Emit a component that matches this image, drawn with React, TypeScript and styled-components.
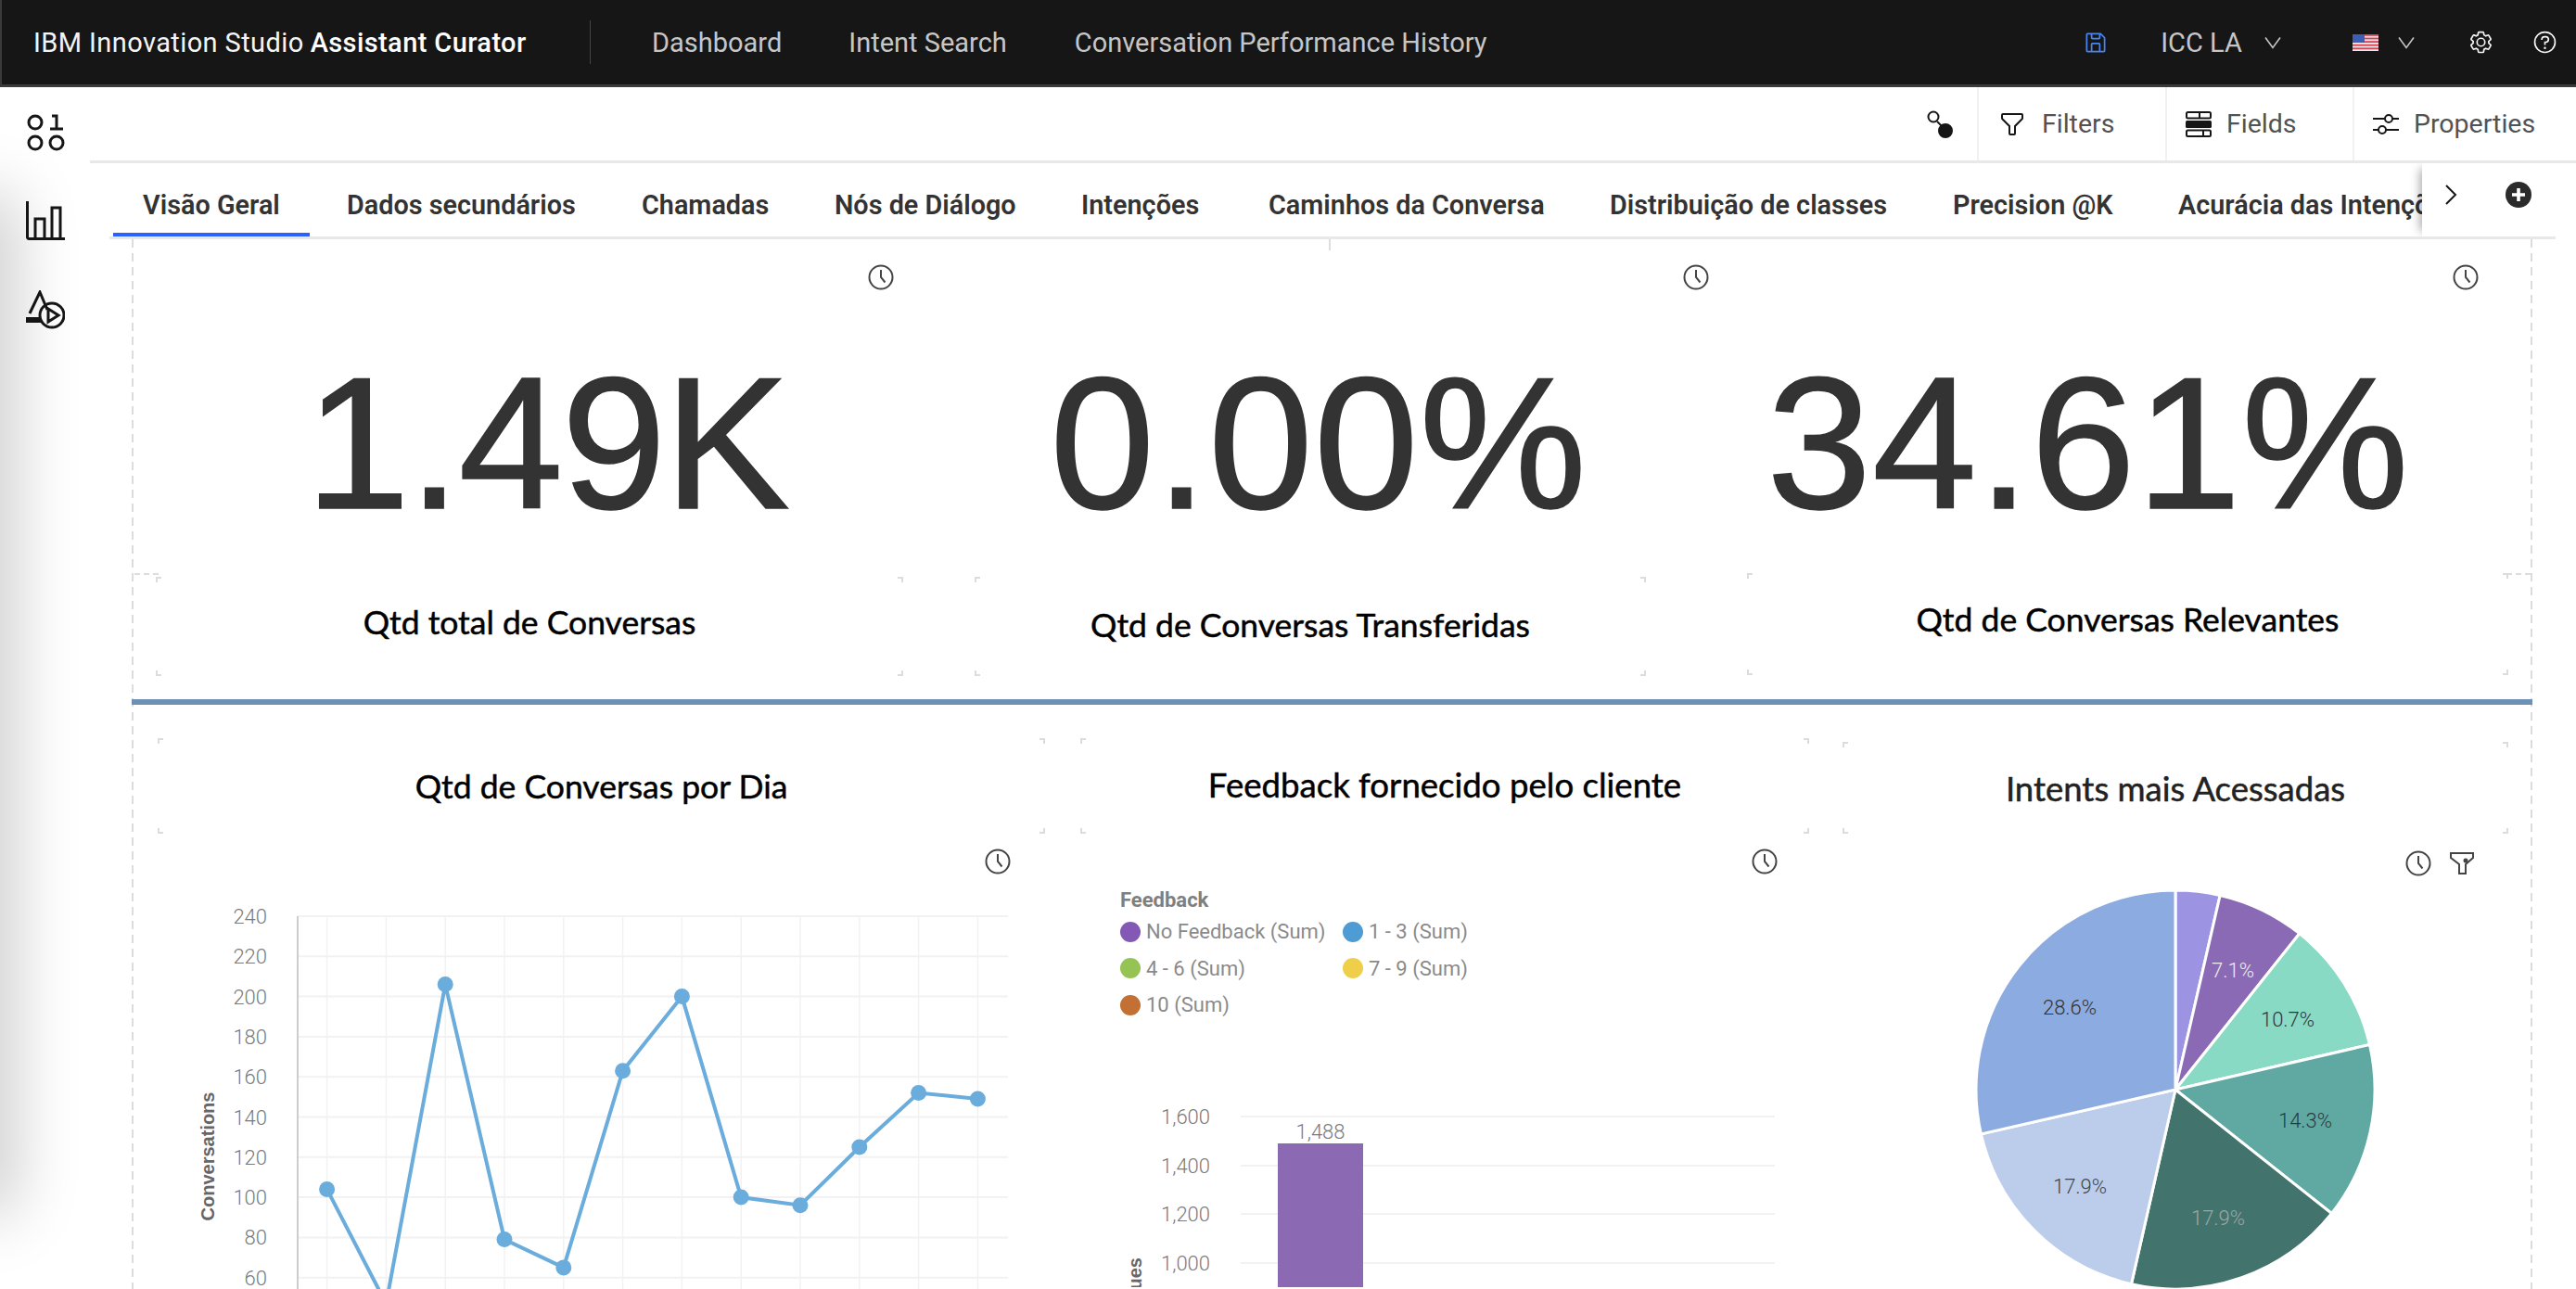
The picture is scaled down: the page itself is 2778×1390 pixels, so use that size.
import React from "react";
import styled, { createGlobalStyle } from "styled-components";

const GlobalStyle = createGlobalStyle`
  html, body {
    margin: 0;
    padding: 0;
    background: #fff;
    font-family: Roboto, "Liberation Sans", sans-serif;
  }
  * { box-sizing: border-box; }
`;

const Page = styled.div`
  width: 2778px;
  height: 1390px;
  overflow: hidden;
  display: flex;
  flex-direction: column;
  background: #fff;
`;

const Nav = styled.header`
  height: 94px;
  flex: none;
  display: flex;
  align-items: center;
  background: #161616;
  border-left: 2px solid #3a3a3a;
  border-bottom: 3px solid #3a3a3a;
  padding-left: 34px;
`;

const Brand = styled.div`
  width: 601px;
  height: 47px;
  display: flex;
  align-items: center;
  border-right: 1px solid #444;
  font-size: 29px;
  letter-spacing: 0.4px;
  color: #f4f4f4;
  white-space: nowrap;
  b { font-weight: 500; color: #fff; margin-left: 7px; }
`;

const NavLink = styled.a`
  font-size: 29px;
  color: #c6c6c6;
  white-space: nowrap;
  margin-left: ${(p: { $left: number }) => p.$left}px;
`;

const NavRight = styled.div`
  margin-left: auto;
  display: flex;
  align-items: center;
  height: 100%;
  color: #c6c6c6;
  font-size: 29px;
`;

const NavSlot = styled.div<{ $w: number; $gap?: number }>`
  width: ${(p) => p.$w}px;
  display: flex;
  align-items: center;
  justify-content: center;
  gap: ${(p) => p.$gap ?? 24}px;
`;

const Body = styled.div`
  flex: 1;
  min-height: 0;
  display: flex;
`;

const Sidebar = styled.aside`
  width: 97px;
  flex: none;
  position: relative;
  overflow: hidden;
  display: flex;
  flex-direction: column;
  align-items: center;
  padding-top: 29px;
  gap: 54px;
  &::before {
    content: "";
    position: absolute;
    left: -40px;
    top: 130px;
    width: 40px;
    height: 1070px;
    box-shadow: 0 0 70px 14px rgba(0, 0, 0, 0.22);
  }
`;

const Main = styled.main`
  flex: 1;
  min-width: 0;
  display: flex;
  flex-direction: column;
`;

const Toolbar = styled.div`
  height: 82px;
  flex: none;
  display: flex;
  justify-content: flex-end;
  border-bottom: 3px solid #e8e8e8;
`;

const ToolLink = styled.div<{ $w: number }>`
  width: ${(p) => p.$w}px;
  display: flex;
  align-items: center;
  gap: 16px;
  padding-left: 20px;
  border-left: 2px solid #f1f1f1;
  font-size: 28.5px;
  color: #525252;
`;

const SearchSlot = styled.div`
  width: 78px;
  display: flex;
  align-items: center;
  padding-left: 24px;
`;

const TabBar = styled.nav`
  height: 82px;
  flex: none;
  margin: 0 22px 0 21px;
  position: relative;
  overflow: hidden;
  display: flex;
  gap: 8px;
  padding-left: 4px;
  border-bottom: 3px solid #e8e8e8;
`;

const Tab = styled.div<{ $active?: boolean; $w: number }>`
  width: ${(p) => p.$w}px;
  flex: none;
  height: 79px;
  padding: 14px 0 0 32px;
  display: flex;
  align-items: center;
  font-size: 28.8px;
  font-weight: 600;
  color: #333;
  white-space: nowrap;
  border-bottom: 4px solid ${(p) => (p.$active ? "#2962ff" : "transparent")};
`;

const TabCover = styled.div`
  position: absolute;
  right: 0;
  top: 0;
  bottom: 0;
  width: 144px;
  background: #fff;
  box-shadow: -8px 0 10px -6px rgba(0, 0, 0, 0.35);
  display: flex;
  align-items: center;
  padding: 0 26px 12px 24px;
  justify-content: space-between;
`;

const dash = "repeating-linear-gradient(to bottom, #dcdcdc 0 9px, transparent 9px 15px)";

const Canvas = styled.section`
  margin-left: 45px;
  width: 2589px;
  flex: 1;
  min-height: 0;
  position: relative;
  overflow: hidden;
  padding: 0 2px 0 3px;
  background: ${dash} left top / 2px 100% no-repeat, ${dash} right top / 2px 100% no-repeat;
  &::before {
    content: "";
    position: absolute;
    left: 1291px;
    top: 0;
    height: 12px;
    border-left: 2px dashed #ddd;
  }
`;

const Metrics = styled.div`
  height: 360px;
  display: grid;
  grid-template-columns: 889px 776px 1fr;
`;

const Metric = styled.div<{ $endPad?: number }>`
  display: flex;
  flex-direction: column;
  padding-right: ${(p) => p.$endPad ?? 0}px;
`;

const MetricTools = styled.div<{ $shift: number }>`
  height: 82px;
  display: flex;
  align-items: center;
  justify-content: flex-end;
  margin-right: ${(p) => p.$shift}px;
`;

const BigNumber = styled.div<{ $track?: number }>`
  margin-top: 36px;
  text-align: center;
  font-family: "Liberation Sans", Arial, sans-serif;
  font-size: 203px;
  line-height: 1;
  letter-spacing: ${(p) => p.$track ?? 0.8}px;
  color: #333;
  white-space: nowrap;
  -webkit-text-stroke: 1.5px #333;
`;

const corner = (c: string) => `
  linear-gradient(${c},${c}) 0 0/6px 2px no-repeat,
  linear-gradient(${c},${c}) 0 0/2px 6px no-repeat,
  linear-gradient(${c},${c}) 100% 0/6px 2px no-repeat,
  linear-gradient(${c},${c}) 100% 0/2px 6px no-repeat,
  linear-gradient(${c},${c}) 0 100%/6px 2px no-repeat,
  linear-gradient(${c},${c}) 0 100%/2px 6px no-repeat,
  linear-gradient(${c},${c}) 100% 100%/6px 2px no-repeat,
  linear-gradient(${c},${c}) 100% 100%/2px 6px no-repeat
`;

const CaptionRow = styled.div`
  height: 136px;
  display: flex;
  align-items: flex-start;
  padding-left: 23px;
  position: relative;
  &::before, &::after {
    content: "";
    position: absolute;
    top: 0;
    width: 26px;
    border-top: 2px dashed #ddd;
  }
  &::before { left: 0; }
  &::after { right: 0; }
`;

const TitleBox = styled.div<{ $w: number; $h: number; $ml?: number; $mt?: number; $pb?: number }>`
  width: ${(p) => p.$w}px;
  height: ${(p) => p.$h}px;
  flex: none;
  margin-left: ${(p) => p.$ml ?? 0}px;
  margin-top: ${(p) => p.$mt ?? 0}px;
  padding-bottom: ${(p) => p.$pb ?? 0}px;
  display: flex;
  align-items: center;
  justify-content: center;
  background: ${corner("#dcdcdc")};
`;

const Title = styled.h3<{ $soft?: boolean; $size?: number }>`
  margin: 0;
  font-family: Lato, "Open Sans", sans-serif;
  font-size: ${(p) => p.$size ?? 35.5}px;
  font-weight: 400;
  color: ${(p) => (p.$soft ? "#222" : "#000")};
  -webkit-text-stroke: 0.5px ${(p) => (p.$soft ? "#222" : "#000")};
  white-space: nowrap;
`;

const Rule = styled.div`
  height: 6px;
  margin: 0 -2px 0 -3px;
  background: #6d90b4;
`;

const TitleRow = styled.div`
  display: flex;
  padding: 36px 0 0 25px;
`;

const ChartGrid = styled.div`
  display: grid;
  grid-template-columns: 975px 840px 1fr;
`;

const ChartPanel = styled.div`
  display: flex;
  flex-direction: column;
  min-width: 0;
`;

const PanelTools = styled.div<{ $right: number; $top?: number }>`
  height: 60px;
  flex: none;
  display: flex;
  align-items: center;
  justify-content: flex-end;
  gap: 20px;
  padding-top: ${(p) => p.$top ?? 0}px;
  padding-right: ${(p) => p.$right}px;
`;

const Legend = styled.div`
  height: 144px;
  padding-left: 88px;
  color: #8a8a8a;
  font-size: 22px;
`;

const LegendTitle = styled.div`
  font-weight: 700;
  height: 24px;
  line-height: 24px;
  color: #7f7f7f;
`;

const LegendGrid = styled.div`
  display: grid;
  grid-template-columns: 240px 200px;
  grid-auto-rows: 39.5px;
  margin-top: 2px;
`;

const LegendItem = styled.div`
  display: flex;
  align-items: center;
  gap: 6px;
  white-space: nowrap;
`;

const Dot = styled.span<{ $c: string }>`
  width: 22px;
  height: 22px;
  border-radius: 50%;
  background: ${(p) => p.$c};
`;

const ChartSvg = styled.svg`
  display: block;
  text {
    font-family: Roboto, "Liberation Sans", sans-serif;
    font-size: 22px;
    font-weight: 300;
    fill: #7a7a7a;
  }
  .axis-title {
    font-family: "Liberation Sans", Arial, sans-serif;
    font-size: 20px;
    font-weight: 700;
    fill: #666;
  }
`;

// ---- icons

const Clock = () => (
  <svg width="28" height="28" viewBox="0 0 28 28" fill="none" stroke="#444" strokeWidth="2">
    <circle cx="14" cy="14" r="12.5" />
    <path d="M14 6v8l4.5 5.5" />
  </svg>
);

const FunnelDot = () => (
  <svg width="26" height="26" viewBox="0 0 26 26" fill="none" stroke="#444" strokeWidth="2">
    <path d="M1 2h24v5l-8 7v10h-7V14L1 7z" />
    <circle cx="17" cy="10" r="2.5" fill="#444" stroke="none" />
  </svg>
);

const Chevron = () => (
  <svg width="18" height="14" viewBox="0 0 18 14" fill="none" stroke="#c6c6c6" strokeWidth="1.6">
    <path d="M1 1.5l8 11 8-11" />
  </svg>
);

const SaveIcon = () => (
  <svg width="28" height="28" viewBox="0 0 32 32" fill="#4a84f0">
    <path d="M27.71,9.29l-5-5A1,1,0,0,0,22,4H6A2,2,0,0,0,4,6V26a2,2,0,0,0,2,2H26a2,2,0,0,0,2-2V10A1,1,0,0,0,27.71,9.29ZM12,6h8v4H12Zm8,20H12V18h8Zm2,0V18a2,2,0,0,0-2-2H12a2,2,0,0,0-2,2v8H6V6h4v4a2,2,0,0,0,2,2h8a2,2,0,0,0,2-2V6.41l4,4V26Z" />
  </svg>
);

const GearIcon = () => (
  <svg width="27" height="27" viewBox="0 0 32 32" fill="#f4f4f4">
    <path d="M27,16.76c0-.25,0-.5,0-.76s0-.51,0-.77l1.92-1.68A2,2,0,0,0,29.3,11L26.94,7a2,2,0,0,0-1.73-1,2,2,0,0,0-.64.1l-2.43.82a11.35,11.35,0,0,0-1.31-.75l-.51-2.52a2,2,0,0,0-2-1.61H13.64a2,2,0,0,0-2,1.61l-.51,2.52a11.48,11.48,0,0,0-1.32.75L7.43,6.06A2,2,0,0,0,6.79,6,2,2,0,0,0,5.06,7L2.7,11a2,2,0,0,0,.41,2.51L5,15.24c0,.25,0,.5,0,.76s0,.51,0,.77L3.11,18.45A2,2,0,0,0,2.7,21L5.06,25a2,2,0,0,0,1.73,1,2,2,0,0,0,.64-.1l2.43-.82a11.35,11.35,0,0,0,1.31.75l.51,2.52a2,2,0,0,0,2,1.61h4.72a2,2,0,0,0,2-1.61l.51-2.52a11.48,11.48,0,0,0,1.32-.75l2.42.82a2,2,0,0,0,.64.1,2,2,0,0,0,1.73-1L29.3,21a2,2,0,0,0-.41-2.51ZM25.21,24l-3.43-1.16a8.86,8.86,0,0,1-2.71,1.57L18.36,28H13.64l-.71-3.55a9.36,9.36,0,0,1-2.7-1.57L6.79,24,4.43,20l2.72-2.4a8.9,8.9,0,0,1,0-3.13L4.43,12,6.79,8l3.43,1.16a8.86,8.86,0,0,1,2.71-1.57L13.64,4h4.72l.71,3.55a9.36,9.36,0,0,1,2.7,1.57L25.21,8,27.57,12l-2.72,2.4a8.9,8.9,0,0,1,0,3.13L27.57,20Z" />
    <path d="M16,22a6,6,0,1,1,6-6A5.94,5.94,0,0,1,16,22Zm0-10a3.91,3.91,0,0,0-4,4,3.91,3.91,0,0,0,4,4,3.91,3.91,0,0,0,4-4A3.91,3.91,0,0,0,16,12Z" />
  </svg>
);

const HelpIcon = () => (
  <svg width="27" height="27" viewBox="0 0 32 32" fill="#f4f4f4">
    <path d="M16,2A14,14,0,1,0,30,16,14,14,0,0,0,16,2Zm0,26A12,12,0,1,1,28,16,12,12,0,0,1,16,28Z" />
    <circle cx="16" cy="23.5" r="1.5" />
    <path d="M17,8H15.5A4.49,4.49,0,0,0,11,12.5V13h2v-.5A2.5,2.5,0,0,1,15.5,10H17a2.5,2.5,0,0,1,0,5H15v4.5h2V17a4.5,4.5,0,0,0,0-9Z" />
  </svg>
);

const FlagIcon = () => (
  <svg width="28" height="18" viewBox="0 0 28 18">
    <rect width="28" height="18" fill="#e8e8f0" />
    {[0, 3.6, 7.2, 10.8, 14.4].map((y) => (
      <rect key={y} y={y} width="28" height="1.8" fill="#d8434f" />
    ))}
    <rect width="13" height="9" fill="#3c5fb5" />
  </svg>
);

const LinkIcon = () => (
  <svg width="28" height="30" viewBox="0 0 28 30" fill="none" stroke="#161616" strokeWidth="2">
    <circle cx="7" cy="7" r="5.5" />
    <path d="M11 12l7 7" />
    <circle cx="20" cy="22" r="7" fill="#161616" />
  </svg>
);

const FilterIcon = () => (
  <svg width="32" height="32" viewBox="0 0 32 32" fill="#161616">
    <path d="M18,28H14a2,2,0,0,1-2-2V18.41L4.59,11A2,2,0,0,1,4,9.59V6A2,2,0,0,1,6,4H26a2,2,0,0,1,2,2V9.59A2,2,0,0,1,27.41,11L20,18.41V26A2,2,0,0,1,18,28ZM6,6V9.59l8,8V26h4V17.59l8-8V6Z" />
  </svg>
);

const FieldsIcon = () => (
  <svg width="28" height="28" viewBox="0 0 28 28" fill="none" stroke="#161616" strokeWidth="2">
    <rect x="1" y="1" width="26" height="6.5" rx="1.5" />
    <path d="M15 1v6.5" />
    <rect x="0" y="10" width="28" height="8" rx="1.5" fill="#161616" stroke="none" />
    <rect x="1" y="20.5" width="26" height="6.5" rx="1.5" />
    <path d="M19 20.5V27" />
  </svg>
);

const SlidersIcon = () => (
  <svg width="28" height="28" viewBox="0 0 28 28" fill="none" stroke="#161616" strokeWidth="2">
    <path d="M0 8h13M21 8h7M0 20h6M14 20h14" />
    <circle cx="17" cy="8" r="4" />
    <circle cx="10" cy="20" r="4" />
  </svg>
);

const BinaryIcon = () => (
  <svg width="42" height="40" viewBox="0 0 42 40" fill="none" stroke="#161616" strokeWidth="3">
    <circle cx="10" cy="9" r="7" />
    <circle cx="10" cy="31" r="7" />
    <circle cx="33" cy="31" r="7" />
    <path d="M28 2h5v14M26 16h14" />
  </svg>
);

const BarsIcon = () => (
  <svg width="42" height="42" viewBox="0 0 42 42" fill="none" stroke="#161616" strokeWidth="3">
    <path d="M1.5 0v38a2 2 0 0 0 2 2.5H42" />
    <path d="M10 40V19h10v21M28 40V7h9v33" />
  </svg>
);

const ShapesIcon = () => (
  <svg width="42" height="42" viewBox="0 0 42 42" fill="none" stroke="#161616" strokeWidth="3">
    <path d="M4 25L15 2l8 19" />
    <rect x="0" y="29" width="16" height="6" fill="#161616" stroke="none" />
    <circle cx="28" cy="27" r="13" />
    <path d="M24 20v14l11-7z" />
  </svg>
);

const PlusCircle = () => (
  <svg width="28" height="28" viewBox="0 0 28 28">
    <circle cx="14" cy="14" r="14" fill="#2b2b2b" />
    <path d="M14 7v14M7 14h14" stroke="#fff" strokeWidth="3.6" />
  </svg>
);

const ChevronRight = () => (
  <svg width="14" height="22" viewBox="0 0 14 22" fill="none" stroke="#161616" strokeWidth="2">
    <path d="M2 1l10 10L2 21" />
  </svg>
);

// ---- data

const tabs: [string, number][] = [
  ["Visão Geral", 212],
  ["Dados secundários", 310],
  ["Chamadas", 200],
  ["Nós de Diálogo", 258],
  ["Intenções", 194],
  ["Caminhos da Conversa", 360],
  ["Distribuição de classes", 362],
  ["Precision @K", 235],
  ["Acurácia das Intenções", 400],
];

const conversations = [104, 47, 206, 79, 65, 163, 200, 100, 96, 125, 152, 149];
const yTicks = [240, 220, 200, 180, 160, 140, 120, 100, 80, 60, 40];
const yOf = (v: number) => 988 + (240 - v) * 2.165;
const xOf = (i: number) => 352.6 + i * 63.8;

const barTicks: [string, number][] = [
  ["1,600", 1206],
  ["1,400", 1259],
  ["1,200", 1311],
  ["1,000", 1364],
];

const pieData = [
  { share: 3.6, color: "#9d93e3" },
  { share: 7.1, color: "#8b6ab5", label: "7.1%", lx: 2408, ly: 1046, text: "#eee" },
  { share: 10.7, color: "#88dac4", label: "10.7%", lx: 2467, ly: 1099, text: "#333" },
  { share: 14.3, color: "#60a9a2", label: "14.3%", lx: 2486, ly: 1208, text: "#2c3a3a" },
  { share: 17.9, color: "#43736d", label: "17.9%", lx: 2392, ly: 1313, text: "#9aa8a5" },
  { share: 17.9, color: "#bccdec", label: "17.9%", lx: 2243, ly: 1279, text: "#444" },
  { share: 28.6, color: "#8cabe0", label: "28.6%", lx: 2232, ly: 1086, text: "#333" },
];

const PIE = { cx: 2346, cy: 1175, r: 215 };

const slices = () => {
  const total = pieData.reduce((s, d) => s + d.share, 0);
  let angle = -Math.PI / 2;
  return pieData.map((d) => {
    const next = angle + (d.share / total) * Math.PI * 2;
    const x0 = PIE.cx + PIE.r * Math.cos(angle);
    const y0 = PIE.cy + PIE.r * Math.sin(angle);
    const x1 = PIE.cx + PIE.r * Math.cos(next);
    const y1 = PIE.cy + PIE.r * Math.sin(next);
    const large = next - angle > Math.PI ? 1 : 0;
    angle = next;
    return { ...d, d: `M${PIE.cx} ${PIE.cy}L${x0} ${y0}A${PIE.r} ${PIE.r} 0 ${large} 1 ${x1} ${y1}Z` };
  });
};

const LineChart = () => (
  <ChartSvg width="975" height="431" viewBox="145 959 975 431">
    {yTicks.map((t) => (
      <g key={t}>
        <line x1="321" x2="1087" y1={yOf(t)} y2={yOf(t)} stroke="#f2f2f2" strokeWidth="2" />
        <text x="288" y={yOf(t) + 8} textAnchor="end">{t}</text>
      </g>
    ))}
    {conversations.map((_, i) => (
      <line key={i} x1={xOf(i)} x2={xOf(i)} y1="988" y2="1390" stroke="#f2f2f2" strokeWidth="1.5" />
    ))}
    <line x1="321" x2="321" y1="988" y2="1390" stroke="#bdbdbd" strokeWidth="1.5" />
    <text className="axis-title" transform="translate(231 1247) rotate(-90)" textAnchor="middle">Conversations</text>
    <polyline
      fill="none"
      stroke="#6aacdc"
      strokeWidth="4"
      points={conversations.map((v, i) => `${xOf(i)},${yOf(v)}`).join(" ")}
    />
    {conversations.map((v, i) => (
      <circle key={i} cx={xOf(i)} cy={yOf(v)} r="8.5" fill="#6aacdc" />
    ))}
  </ChartSvg>
);

const BarChart = () => (
  <ChartSvg width="840" height="285" viewBox="1120 1105 840 285">
    {barTicks.map(([t, y]) => (
      <g key={t}>
        <line x1="1338" x2="1914" y1={y} y2={y} stroke="#f2f2f2" strokeWidth="2" />
        <text x="1305" y={y + 8} textAnchor="end">{t}</text>
      </g>
    ))}
    <rect x="1378" y="1235" width="92" height="155" fill="#8b69b3" />
    <text x="1424" y="1230" textAnchor="middle">1,488</text>
    <text className="axis-title" transform="translate(1231 1358) rotate(-90)" textAnchor="end">Values</text>
  </ChartSvg>
);

const PieChart = () => (
  <ChartSvg width="769" height="431" viewBox="1960 959 769 431">
    {slices().map((s, i) => (
      <path key={i} d={s.d} fill={s.color} stroke="#fff" strokeWidth="3" />
    ))}
    {pieData.map((s, i) =>
      s.label ? (
        <text key={i} x={s.lx} y={s.ly + 8} textAnchor="middle" style={{ fill: s.text }}>
          {s.label}
        </text>
      ) : null
    )}
  </ChartSvg>
);

export default function App() {
  return (
    <Page>
      <GlobalStyle />
      <Nav>
        <Brand>
          IBM Innovation Studio <b>Assistant Curator</b>
        </Brand>
        <NavLink $left={66}>Dashboard</NavLink>
        <NavLink $left={72}>Intent Search</NavLink>
        <NavLink $left={73}>Conversation Performance History</NavLink>
        <NavRight>
          <NavSlot $w={60}><SaveIcon /></NavSlot>
          <NavSlot $w={210}>ICC LA <Chevron /></NavSlot>
          <NavSlot $w={140} $gap={21}><FlagIcon /><Chevron /></NavSlot>
          <NavSlot $w={70}><GearIcon /></NavSlot>
          <NavSlot $w={68}><HelpIcon /></NavSlot>
        </NavRight>
      </Nav>
      <Body>
        <Sidebar>
          <BinaryIcon />
          <BarsIcon />
          <ShapesIcon />
        </Sidebar>
        <Main>
          <Toolbar>
            <SearchSlot><LinkIcon /></SearchSlot>
            <ToolLink $w={203}><FilterIcon />Filters</ToolLink>
            <ToolLink $w={202}><FieldsIcon />Fields</ToolLink>
            <ToolLink $w={241}><SlidersIcon />Properties</ToolLink>
          </Toolbar>
          <TabBar>
            {tabs.map(([name, w], i) => (
              <Tab key={name} $active={i === 0} $w={w}>{name}</Tab>
            ))}
            <TabCover>
              <ChevronRight />
              <PlusCircle />
            </TabCover>
          </TabBar>
          <Canvas>
            <Metrics>
              <Metric>
                <MetricTools $shift={70}><Clock /></MetricTools>
                <BigNumber $track={-2}>1.49K</BigNumber>
              </Metric>
              <Metric>
                <MetricTools $shift={-33}><Clock /></MetricTools>
                <BigNumber>0.00%</BigNumber>
              </Metric>
              <Metric $endPad={35}>
                <MetricTools $shift={21}><Clock /></MetricTools>
                <BigNumber>34.61%</BigNumber>
              </Metric>
            </Metrics>
            <CaptionRow>
              <TitleBox $w={806} $h={107} $mt={4} $pb={10}><Title>Qtd total de Conversas</Title></TitleBox>
              <TitleBox $w={724} $h={107} $ml={77} $mt={4} $pb={5}><Title>Qtd de Conversas Transferidas</Title></TitleBox>
              <TitleBox $w={821} $h={110} $ml={109} $pb={12}><Title>Qtd de Conversas Relevantes</Title></TitleBox>
            </CaptionRow>
            <Rule />
            <TitleRow>
              <TitleBox $w={957} $h={103}><Title>Qtd de Conversas por Dia</Title></TitleBox>
              <TitleBox $w={786} $h={103} $ml={38} $pb={3}><Title $size={36.6}>Feedback fornecido pelo cliente</Title></TitleBox>
              <TitleBox $w={718} $h={99} $ml={36} $mt={4}><Title $soft $size={36.5}>Intents mais Acessadas</Title></TitleBox>
            </TitleRow>
            <ChartGrid>
              <ChartPanel>
                <PanelTools $right={30}><Clock /></PanelTools>
                <LineChart />
              </ChartPanel>
              <ChartPanel>
                <PanelTools $right={43}><Clock /></PanelTools>
                <Legend>
                  <LegendTitle>Feedback</LegendTitle>
                  <LegendGrid>
                    <LegendItem><Dot $c="#8459b5" />No Feedback (Sum)</LegendItem>
                    <LegendItem><Dot $c="#4f9bd4" />1 - 3 (Sum)</LegendItem>
                    <LegendItem><Dot $c="#95c354" />4 - 6 (Sum)</LegendItem>
                    <LegendItem><Dot $c="#efcf4a" />7 - 9 (Sum)</LegendItem>
                    <LegendItem><Dot $c="#c27034" />10 (Sum)</LegendItem>
                  </LegendGrid>
                </Legend>
                <BarChart />
              </ChartPanel>
              <ChartPanel>
                <PanelTools $right={61} $top={3}><Clock /><FunnelDot /></PanelTools>
                <PieChart />
              </ChartPanel>
            </ChartGrid>
          </Canvas>
        </Main>
      </Body>
    </Page>
  );
}
